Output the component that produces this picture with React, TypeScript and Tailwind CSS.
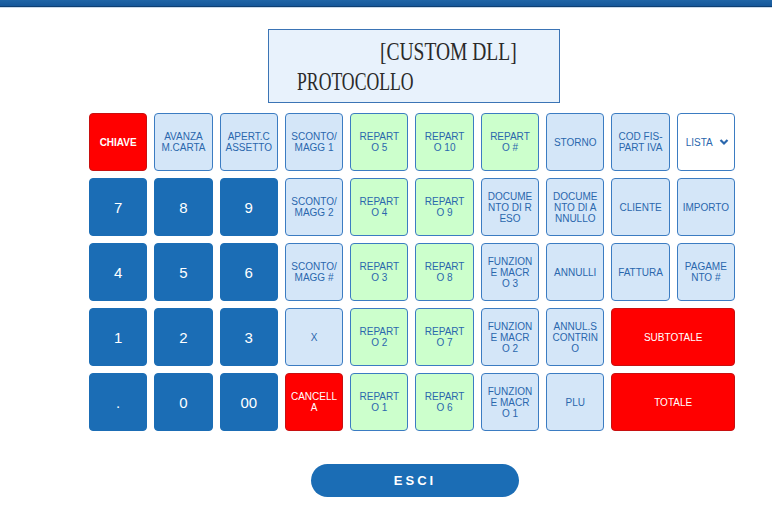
import React from "react";

type Kind = "light" | "green" | "dark" | "red" | "select";

type Key = { lines: string[]; kind: Kind; span?: number; bold?: boolean };

const L = (s: string, kind: Kind = "light", extra: Partial<Key> = {}): Key => ({
  lines: s.split("|"),
  kind,
  ...extra,
});

const rows: Key[][] = [
  [
    L("CHIAVE", "red", { bold: true }),
    L("AVANZA|M.CARTA"),
    L("APERT.C|ASSETTO"),
    L("SCONTO/|MAGG 1"),
    L("REPART|O 5", "green"),
    L("REPART|O 10", "green"),
    L("REPART|O #", "green"),
    L("STORNO"),
    L("COD FIS-|PART IVA"),
    L("LISTA", "select"),
  ],
  [
    L("7", "dark"),
    L("8", "dark"),
    L("9", "dark"),
    L("SCONTO/|MAGG 2"),
    L("REPART|O 4", "green"),
    L("REPART|O 9", "green"),
    L("DOCUME|NTO DI R|ESO"),
    L("DOCUME|NTO DI A|NNULLO"),
    L("CLIENTE"),
    L("IMPORTO"),
  ],
  [
    L("4", "dark"),
    L("5", "dark"),
    L("6", "dark"),
    L("SCONTO/|MAGG #"),
    L("REPART|O 3", "green"),
    L("REPART|O 8", "green"),
    L("FUNZION|E MACR|O 3"),
    L("ANNULLI"),
    L("FATTURA"),
    L("PAGAME|NTO #"),
  ],
  [
    L("1", "dark"),
    L("2", "dark"),
    L("3", "dark"),
    L("X"),
    L("REPART|O 2", "green"),
    L("REPART|O 7", "green"),
    L("FUNZION|E MACR|O 2"),
    L("ANNUL.S|CONTRIN|O"),
    L("SUBTOTALE", "red", { span: 2 }),
  ],
  [
    L(".", "dark"),
    L("0", "dark"),
    L("00", "dark"),
    L("CANCELL|A", "red"),
    L("REPART|O 1", "green"),
    L("REPART|O 6", "green"),
    L("FUNZION|E MACR|O 1"),
    L("PLU"),
    L("TOTALE", "red", { span: 2 }),
  ],
];

const kindClass: Record<Kind, string> = {
  light: "bg-[#d4e6f8] border-[#3b7cc2] text-[#2a67ad] text-[10px] leading-[11px]",
  green: "bg-[#ccffcc] border-[#3b7cc2] text-[#2a67ad] text-[10px] leading-[11px]",
  dark: "bg-[#1b6db5] border-[#1b6db5] text-white text-[15px] leading-[17px]",
  red: "bg-[#ff0000] border-[#c81010] text-white text-[10px] leading-[11px]",
  select: "bg-white border-[#3b7cc2] text-[#2a67ad] text-[10px] leading-[11px]",
};

function Button({ k }: { k: Key }) {
  const base = "h-[58px] rounded-[4px] border flex items-center text-center whitespace-nowrap";
  if (k.kind === "select") {
    return (
      <div className={`${base} ${kindClass.select} justify-between pl-[8px] pr-[5px]`}>
        <span>LISTA</span>
        <svg width="10" height="8" viewBox="0 0 10 8">
          <path d="M1.5 2 L5 5.5 L8.5 2" fill="none" stroke="#2a67ad" strokeWidth="2.2" />
        </svg>
      </div>
    );
  }
  return (
    <div
      className={`${base} justify-center ${kindClass[k.kind]} ${k.span === 2 ? "col-span-2" : ""} ${
        k.bold ? "font-bold" : ""
      }`}
    >
      <div className="flex flex-col">
        {k.lines.map((l, i) => (
          <span key={i}>{l}</span>
        ))}
      </div>
    </div>
  );
}

export default function App() {
  const serif = { fontFamily: '"Liberation Serif", "Times New Roman", serif' };
  return (
    <div
      className="w-[772px] h-[511px] bg-white overflow-hidden"
      style={{ fontFamily: '"Liberation Sans", Arial, sans-serif' }}
    >
      <div className="h-[7px] bg-gradient-to-b from-[#2065a6] to-[#15579a] border-b border-[#0e3f72]" />
      <div className="h-[1px] bg-[#c9d9ea]" />
      <div className="ml-[89px] w-[646px] flex flex-col">
        <div className="mt-[21px] ml-[179px] w-[292px] h-[74px] border border-[#3b74b5] bg-[#e8f2fc] text-[#2a2a2a] flex flex-col pt-[7px]">
          <div
            className="ml-[111px] origin-left scale-x-[0.75] whitespace-pre text-[26px] leading-[30px]"
            style={serif}
          >
            [CUSTOM DLL]
          </div>
          <div
            className="ml-[28px] origin-left scale-x-[0.68] whitespace-pre text-[26px] leading-[30px]"
            style={serif}
          >
            PROTOCOLLO
          </div>
        </div>
        <div className="mt-[10px] grid grid-cols-10 gap-[7px]">
          {rows.flat().map((k, i) => (
            <Button key={i} k={k} />
          ))}
        </div>
        <div className="mt-[33px] ml-[222px] w-[208px] h-[33px] rounded-full bg-[#1b6db5] text-white font-bold text-[13px] tracking-[3px] flex items-center justify-center">
          ESCI
        </div>
      </div>
    </div>
  );
}
